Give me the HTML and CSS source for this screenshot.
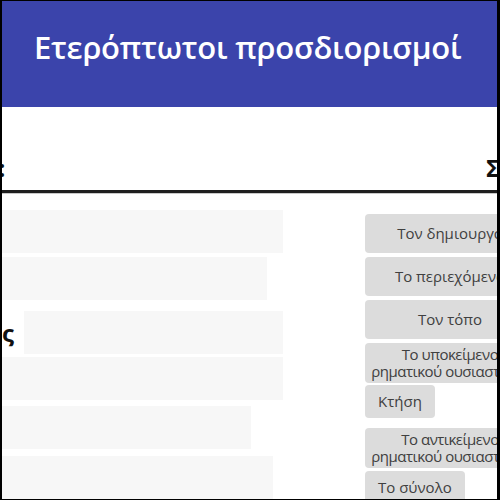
FILE: index.html
```html
<!DOCTYPE html>
<html lang="el">
<head>
<meta charset="utf-8">
<title>Ετερόπτωτοι προσδιορισμοί</title>
<link rel="stylesheet" href="styles.css">
</head>
<body>
<div class="frame">
  <header class="topbar">
    <h1 class="title">Ετερόπτωτοι προσδιορισμοί</h1>
  </header>
  <section class="exercise">
    <div class="heads">
      <div class="head head-sent">Πρόταση:</div>
      <div class="head head-opts">Σύρετε τις απαντήσεις</div>
    </div>
    <div class="body">
      <div class="sentences">
        <div class="sent"><span class="blank w-full"></span></div>
        <div class="sent gap-s"><span class="blank w-385"></span></div>
        <div class="sent sent-end gap-l"><span class="word">της μητέρας</span><span class="blank w-259"></span></div>
        <div class="sent gap-xs"><span class="blank w-full"></span></div>
        <div class="sent gap-m"><span class="blank w-369"></span></div>
        <div class="sent gap-m2"><span class="blank w-391"></span></div>
      </div>
      <div class="options">
        <div class="opt wide">Τον δημιουργό</div>
        <div class="opt wide g4">Το περιεχόμενο</div>
        <div class="opt wide g4">Τον τόπο</div>
        <div class="opt wide two g4">Το υποκείμενο ρηματικού ουσιαστικού</div>
        <div class="opt g2">Κτήση</div>
        <div class="opt wide two g10">Το αντικείμενο ρηματικού ουσιαστικού</div>
        <div class="opt g3">Το σύνολο</div>
      </div>
    </div>
  </section>
</div>
</body>
</html>
```
FILE: styles.css
```css
html, body {
  margin: 0;
  padding: 0;
  background: #fff;
}

body {
  font-family: "Open Sans", "Liberation Sans", sans-serif;
}

.frame {
  width: 500px;
  height: 500px;
  box-sizing: border-box;
  border-style: solid;
  border-color: #000;
  border-width: 1px 3px 1px 2px;
  overflow: hidden;
  background: #fff;
}

.topbar {
  background: #3b44ab;
  height: 106px;
  box-sizing: border-box;
  padding: 25px 0 0 32px;
}

.title {
  margin: 0;
  color: #fff;
  font-size: 31px;
  font-weight: 600;
  line-height: 43px;
  letter-spacing: -0.2px;
  white-space: nowrap;
}

.exercise {
  margin-left: -120px;
}

.heads {
  display: grid;
  grid-template-columns: 401px 1fr;
  column-gap: 82px;
  padding-top: 44px;
  padding-bottom: 6px;
  border-bottom: 3px solid #1e1e1e;
  box-shadow: 0 1px 0 #c8c8c8;
}

.head {
  font-size: 24px;
  font-weight: 700;
  line-height: normal;
  color: #111;
  white-space: nowrap;
}

.head-sent {
  padding-left: 9px;
}

.head-opts {
  padding-left: 121px;
}

.body {
  display: grid;
  grid-template-columns: 401px 170px;
  column-gap: 82px;
  margin-top: 17px;
  align-items: start;
}

.sentences {
  display: flex;
  flex-direction: column;
}

.sent {
  display: flex;
  align-items: center;
  height: 43px;
}

.sent-end {
  justify-content: flex-end;
}

.gap-s { margin-top: 4px; }
.gap-l { margin-top: 11px; }
.gap-xs { margin-top: 3px; }
.gap-m { margin-top: 6px; }
.gap-m2 { margin-top: 7px; }

.word {
  flex: none;
  white-space: nowrap;
  font-size: 24px;
  font-weight: 700;
  color: #111;
  margin-right: 10px;
}

.blank {
  flex: none;
  height: 43px;
  background: #f7f7f7;
}

.w-full { width: 401px; }
.w-385 { width: 385px; }
.w-259 { width: 259px; }
.w-369 { width: 369px; }
.w-391 { width: 391px; }

.options {
  display: flex;
  flex-direction: column;
  align-items: flex-start;
  margin-top: 4px;
}

.opt {
  background: #dcdcdc;
  border-radius: 4px;
  color: #404040;
  font-size: 15px;
  line-height: 17px;
  padding: 8px 13px;
  box-sizing: border-box;
  white-space: nowrap;
}

.opt.wide {
  width: 170px;
  min-height: 39px;
  display: flex;
  align-items: center;
  justify-content: center;
  text-align: center;
  padding: 3px 0;
  white-space: normal;
}

.opt.two {
  letter-spacing: -0.5px;
}

.g2 { margin-top: 2px; }
.g3 { margin-top: 3px; }
.g4 { margin-top: 4px; }
.g10 { margin-top: 10px; }
```
